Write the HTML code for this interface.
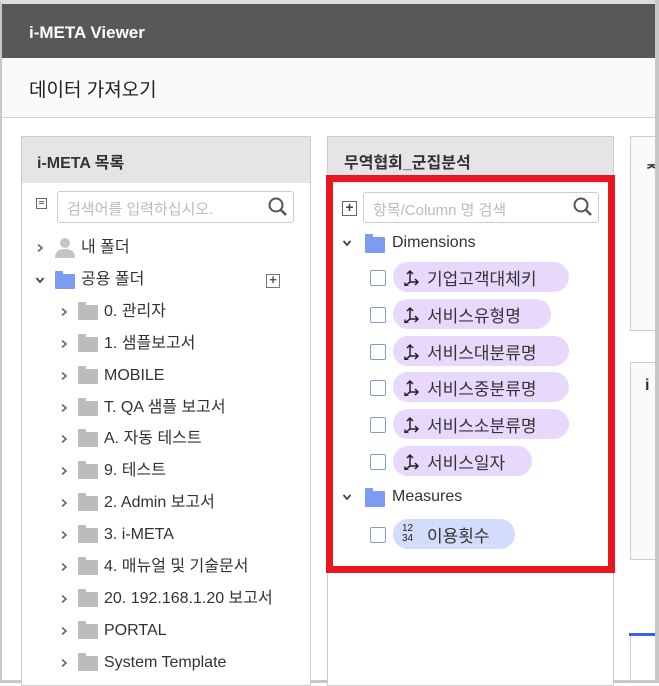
<!DOCTYPE html><html><head><meta charset="utf-8"><style>
*{box-sizing:border-box;margin:0;padding:0}
body{width:659px;height:683px;overflow:hidden;background:#fff;font-family:"Liberation Sans","Noto Sans CJK KR",sans-serif;color:#333;position:relative}
.a{position:absolute}
.frame{left:0;top:0;width:659px;height:683px;border:2px solid #c8c8c8;border-top:4px solid #ddd;border-bottom:3px solid #c8c8c8}
.title{left:2px;top:4px;width:655px;height:54px;background:#58585a;color:#fff;font-weight:bold;font-size:17px;padding:19px 0 0 27px}
.sub{left:2px;top:58px;width:655px;height:60px;background:#fafafa;border-bottom:1px solid #d2d2d2;font-size:19px;padding:17px 0 0 27px;color:#222}
.panel{border:1px solid #ccc;background:#fff}
.ph{background:#e5e5e8;font-size:16px;font-weight:bold;color:#333;height:46px;padding:12px 0 0 15px}
.row{position:absolute;font-size:16px;color:#333;white-space:nowrap;line-height:20px}
.chev{position:absolute;width:10px;height:10px}
.fold{position:absolute;width:20px;height:15px;background:#bcbcbc;border-radius:1px}
.fold:before{content:"";position:absolute;left:0;top:-3px;width:8px;height:4px;background:inherit;border-radius:1px 1px 0 0}
.cb{position:absolute;width:16px;height:16px;border:1.5px solid #7fa0c6;border-radius:2px;background:#fff}
.pill{position:absolute;height:30px;border-radius:15px;background:#e8d9fc;font-size:17px;color:#333;padding:3px 0 0 34px;white-space:nowrap}
.pill svg{position:absolute;left:10px;top:7px}
</style></head><body>
<svg width="0" height="0" style="position:absolute"><defs>
<symbol id="r" viewBox="0 0 10 10"><path d="M3 1.5L7 5 3 8.5" stroke="#666" stroke-width="1.6" fill="none"/></symbol>
<symbol id="d" viewBox="0 0 10 10"><path d="M1.5 3L5 7 8.5 3" stroke="#444" stroke-width="1.8" fill="none"/></symbol>
<symbol id="ax" viewBox="0 0 18 17"><path d="M7 13V2M4 5l3-3 3 3M7 13h8M12 10l3 3-3 3M7 13L2 17M2 13.5V17h3.5" stroke="#222" stroke-width="1.5" fill="none"/></symbol>
</defs></svg>
<div class="a frame"></div>
<div class="a title">i-META Viewer</div>
<div class="a sub">데이터 가져오기</div>

<div class="a panel" style="left:21px;top:136px;width:290px;height:550px">
<div class="ph">i-META 목록</div></div>
<div class="a" style="left:36px;top:198px;width:11px;height:11px;border:1.5px solid #666"><div style="position:absolute;left:2px;top:2px;width:5px;height:1px;background:#666;box-shadow:0 2px 0 #666"></div></div>
<div class="a" style="left:57px;top:191px;width:237px;height:32px;border:1.5px solid #ccc;border-radius:3px;font-size:15px;color:#bbb;padding:6px 0 0 9px">검색어를 입력하십시오.</div>
<svg class="a" style="left:267px;top:196px" width="22" height="22"><circle cx="9" cy="9" r="6.5" stroke="#555" stroke-width="2" fill="none"/><line x1="14" y1="14" x2="19" y2="19" stroke="#555" stroke-width="2.5"/></svg>

<svg class="chev" style="left:35px;top:243px"><use href="#r"/></svg>
<svg class="a" style="left:54px;top:237px" width="22" height="21"><circle cx="11" cy="6" r="5" fill="#c4c4c4"/><path d="M1 21 Q1 12 11 12 Q21 12 21 21Z" fill="#c4c4c4"/></svg>
<div class="row" style="left:81px;top:238px">내 폴더</div>
<svg class="chev" style="left:35px;top:275px"><use href="#d"/></svg>
<div class="fold" style="left:55px;top:274px;background:#7b9cf0"></div>
<div class="row" style="left:81px;top:270px">공용 폴더</div>
<div class="a" style="left:266px;top:274px;width:14px;height:14px;border:1.5px solid #777;font-size:13px;line-height:10px;text-align:center;color:#555;font-weight:bold">+</div>

<svg class="chev" style="left:59px;top:307px"><use href="#r"/></svg><div class="fold" style="left:78px;top:305px"></div><div class="row" style="left:104px;top:302px">0. 관리자</div>
<svg class="chev" style="left:59px;top:339px"><use href="#r"/></svg><div class="fold" style="left:78px;top:337px"></div><div class="row" style="left:104px;top:334px">1. 샘플보고서</div>
<svg class="chev" style="left:59px;top:371px"><use href="#r"/></svg><div class="fold" style="left:78px;top:369px"></div><div class="row" style="left:104px;top:366px">MOBILE</div>
<svg class="chev" style="left:59px;top:403px"><use href="#r"/></svg><div class="fold" style="left:78px;top:401px"></div><div class="row" style="left:104px;top:398px">T. QA 샘플 보고서</div>
<svg class="chev" style="left:59px;top:434px"><use href="#r"/></svg><div class="fold" style="left:78px;top:432px"></div><div class="row" style="left:104px;top:429px">A. 자동 테스트</div>
<svg class="chev" style="left:59px;top:466px"><use href="#r"/></svg><div class="fold" style="left:78px;top:464px"></div><div class="row" style="left:104px;top:461px">9. 테스트</div>
<svg class="chev" style="left:59px;top:498px"><use href="#r"/></svg><div class="fold" style="left:78px;top:496px"></div><div class="row" style="left:104px;top:493px">2. Admin 보고서</div>
<svg class="chev" style="left:59px;top:530px"><use href="#r"/></svg><div class="fold" style="left:78px;top:528px"></div><div class="row" style="left:104px;top:525px">3. i-META</div>
<svg class="chev" style="left:59px;top:562px"><use href="#r"/></svg><div class="fold" style="left:78px;top:560px"></div><div class="row" style="left:104px;top:557px">4. 매뉴얼 및 기술문서</div>
<svg class="chev" style="left:59px;top:594px"><use href="#r"/></svg><div class="fold" style="left:78px;top:592px"></div><div class="row" style="left:104px;top:589px">20. 192.168.1.20 보고서</div>
<svg class="chev" style="left:59px;top:626px"><use href="#r"/></svg><div class="fold" style="left:78px;top:624px"></div><div class="row" style="left:104px;top:621px">PORTAL</div>
<svg class="chev" style="left:59px;top:658px"><use href="#r"/></svg><div class="fold" style="left:78px;top:656px"></div><div class="row" style="left:104px;top:653px">System Template</div>

<div class="a panel" style="left:327px;top:136px;width:287px;height:550px">
<div class="ph" style="padding-left:16px">무역협회_군집분석</div></div>
<div class="a" style="left:326px;top:175px;width:289px;height:398px;border:7px solid #ea1520"></div>
<div class="a" style="left:342px;top:201px;width:15px;height:15px;border:1.5px solid #666;font-size:14px;line-height:11px;text-align:center;color:#444;font-weight:bold">+</div>
<div class="a" style="left:363px;top:192px;width:236px;height:31px;border:1.5px solid #ccc;border-radius:3px;font-size:15px;color:#bbb;padding:6px 0 0 9px">항목/Column 명 검색</div>
<svg class="a" style="left:572px;top:196px" width="22" height="22"><circle cx="9" cy="9" r="6.5" stroke="#555" stroke-width="2" fill="none"/><line x1="14" y1="14" x2="19" y2="19" stroke="#555" stroke-width="2.5"/></svg>

<svg class="chev" style="left:342px;top:238px"><use href="#d"/></svg>
<div class="fold" style="left:365px;top:237px;background:#7b9cf0;height:16px"></div>
<div class="row" style="left:392px;top:233px">Dimensions</div>

<div class="cb" style="left:370px;top:270px"></div><div class="pill" style="left:393px;top:262px;width:176px"><svg width="18" height="17"><use href="#ax"/></svg>기업고객대체키</div>
<div class="cb" style="left:370px;top:307px"></div><div class="pill" style="left:393px;top:299px;width:158px"><svg width="18" height="17"><use href="#ax"/></svg>서비스유형명</div>
<div class="cb" style="left:370px;top:344px"></div><div class="pill" style="left:393px;top:336px;width:176px"><svg width="18" height="17"><use href="#ax"/></svg>서비스대분류명</div>
<div class="cb" style="left:370px;top:380px"></div><div class="pill" style="left:393px;top:372px;width:176px"><svg width="18" height="17"><use href="#ax"/></svg>서비스중분류명</div>
<div class="cb" style="left:370px;top:417px"></div><div class="pill" style="left:393px;top:409px;width:176px"><svg width="18" height="17"><use href="#ax"/></svg>서비스소분류명</div>
<div class="cb" style="left:370px;top:454px"></div><div class="pill" style="left:393px;top:446px;width:139px"><svg width="18" height="17"><use href="#ax"/></svg>서비스일자</div>

<svg class="chev" style="left:342px;top:492px"><use href="#d"/></svg>
<div class="fold" style="left:365px;top:491px;background:#7b9cf0;height:16px"></div>
<div class="row" style="left:392px;top:487px">Measures</div>
<div class="cb" style="left:370px;top:527px"></div><div class="pill" style="left:393px;top:519px;width:122px;background:#d3dcfb"><span style="position:absolute;left:9px;top:5px;font-size:10px;line-height:10px;color:#222">12<br>34</span>이용횟수</div>

<div class="a panel" style="left:630px;top:136px;width:40px;height:195px;background:#fafafa"><div style="position:absolute;left:14px;top:14px;font-weight:bold;font-size:15px">ᆽ</div></div>
<div class="a panel" style="left:630px;top:362px;width:40px;height:198px;background:#fafafa"><div style="position:absolute;left:14px;top:14px;font-weight:bold;font-size:16px">i</div></div>
<div class="a" style="left:629px;top:633px;width:30px;height:3px;background:#3a62e6"></div>
<div class="a" style="left:630px;top:636px;width:1px;height:47px;background:#ccc"></div>
<div class="a" style="left:655px;top:0;width:4px;height:683px;background:#c8c8c8"></div>
</body></html>
